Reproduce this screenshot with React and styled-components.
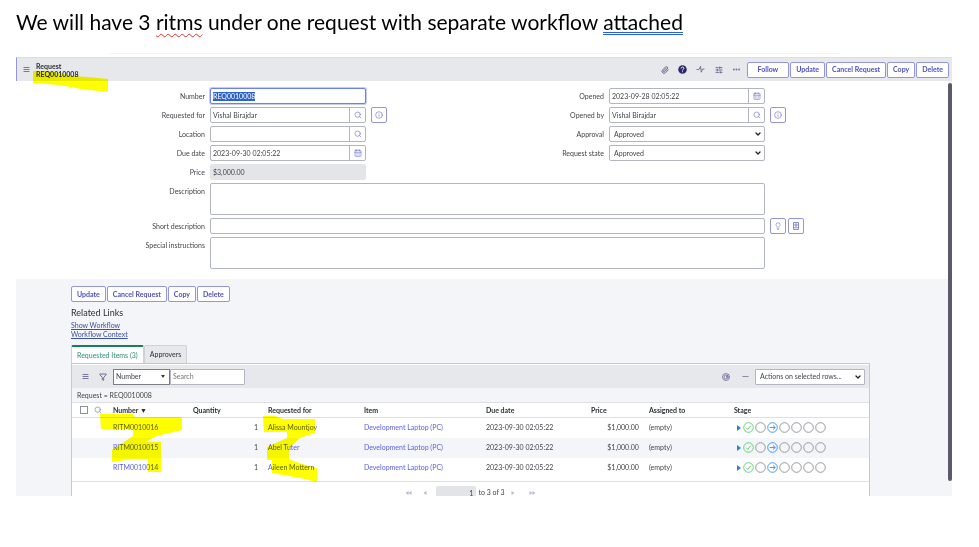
import React, { useEffect, useRef } from "react";
import styled, { createGlobalStyle } from "styled-components";
import {
  Paperclip,
  Search,
  Info,
  CalendarDays,
  SlidersHorizontal,
  Ellipsis,
  Lightbulb,
  Minus,
  Funnel,
  ChevronDown,
} from "lucide-react";

const c = {
  text: "#42454a",
  strong: "#2c2f35",
  purple: "#4f4fc4",
  purpleLine: "#9496dc",
  link: "#5a5fe6",
  line: "#b3b5c2",
  rule: "#dddfe4",
  bar: "#e7e8ec",
  wash: "#f4f5f8",
};

const GlobalStyle = createGlobalStyle`
  *, *::before, *::after { box-sizing: border-box; }
  body { margin: 0; background: #fff; overflow: hidden; }
  button, input, select, textarea { font: inherit; color: inherit; margin: 0; }
  ::selection { background: #2b62cc; color: #fff; }
`;

const Page = styled.main`
  font-family: Lato, "Liberation Sans", sans-serif;
  font-size: 7px;
  line-height: 9px;
  color: ${c.text};
  padding: 0 27px 0 16px;
`;

const Heading = styled.h1`
  margin: 0;
  padding-top: 9px;
  height: 53px;
  font-size: 21px;
  line-height: 26px;
  font-weight: 400;
  color: #000;
  white-space: nowrap;
`;

const Misspelt = styled.span`
  text-decoration: underline wavy #e03030 1px;
  text-underline-offset: 3px;
  text-decoration-skip-ink: none;
`;

const Grammar = styled.span`
  display: inline-block;
  line-height: 20px;
  border-bottom: 3px double #2a5fe0;
`;

const Hairline = styled.div`
  height: 4px;
  margin: 0 112px 0 94px;
  border-top: 1px solid #f3f3f3;
`;

const Window = styled.section`
  display: flex;
  flex-direction: column;
  overflow: hidden;
`;

const TopBar = styled.header`
  position: relative;
  display: flex;
  align-items: center;
  height: 24px;
  padding: 0 3px 0 4px;
  background: ${c.bar};
  border-top: 1px solid #dcdee2;
  border-left: 1px solid ${c.purpleLine};
`;

const RecordTitle = styled.h2`
  margin: 0 auto 0 5px;
  font-size: 7px;
  line-height: 8px;
  font-weight: 700;
  color: ${c.strong};
`;

const TopTools = styled.div`
  display: flex;
  align-items: center;
  gap: 8px;
  margin-right: 5px;
`;

const Tool = styled.button`
  display: grid;
  place-items: center;
  width: ${(p) => (p.$wide ? 12 : 10)}px;
  height: 12px;
  padding: 0;
  border: 0;
  background: none;
  color: ${(p) => (p.$dark ? "#2b2867" : "#6c6a94")};
`;

const ButtonRow = styled.div`
  display: flex;
  gap: 1px;
`;

const ActionButton = styled.button`
  height: 16px;
  padding: 0 ${(p) => (p.$roomy ? 10 : 5)}px;
  border: 1px solid ${c.purpleLine};
  border-radius: 2px;
  background: #fff;
  color: ${c.purple};
  font-weight: 700;
  white-space: nowrap;
`;

const Scroller = styled.div`
  display: flex;
  background: ${c.wash};
`;

const Content = styled.div`
  flex: 1;
  min-width: 0;
`;

const Track = styled.div`
  width: 4px;
  padding: 2px 0 15px;
  display: flex;
`;

const Thumb = styled.div`
  flex: 1;
  border-radius: 2px;
  background: #5d586b;
`;

const Form = styled.form`
  display: flex;
  flex-direction: column;
  gap: 3px;
  padding: 7px 0 10px;
  background: #fff;
`;

const Columns = styled.div`
  display: flex;
`;

const Column = styled.div`
  flex: 1 1 ${(p) => p.$basis}px;
  display: flex;
  flex-direction: column;
  gap: 3px;
`;

const Row = styled.div`
  display: grid;
  grid-template-columns: 189px minmax(0, 1fr) ${(p) => p.$aside}px;
  column-gap: 5px;
`;

const Label = styled.label`
  padding-top: 4px;
  text-align: right;
`;

const Aside = styled.div`
  display: flex;
  gap: 2px;
`;

const Control = styled.div`
  position: relative;
  display: flex;
  height: 16px;
  border: 1px solid ${(p) => (p.$active ? "#6f7ff0" : c.line)};
  border-radius: 2px;
  background: ${(p) => (p.$readonly ? "#e4e5e9" : "#fff")};
  border-color: ${(p) => (p.$readonly ? "#e4e5e9" : null)};
  box-shadow: ${(p) => (p.$active ? "0 0 0 1px #c5cbfa" : "none")};
`;

const TextInput = styled.input`
  flex: 1;
  min-width: 0;
  width: 100%;
  padding: 0 2px;
  border: 0;
  outline: 0;
  background: transparent;
`;

const TextArea = styled.textarea`
  display: block;
  width: 100%;
  height: 32px;
  padding: 2px;
  border: 1px solid ${c.line};
  border-radius: 2px;
  outline: 0;
  resize: none;
  background: #fff;
`;

const AddOn = styled.button`
  display: grid;
  place-items: center;
  width: 16px;
  padding: 0;
  border: 0;
  border-left: 1px solid ${c.line};
  background: none;
  color: #7577d4;
`;

const IconButton = styled.button`
  display: grid;
  place-items: center;
  width: 16px;
  height: 16px;
  padding: 0;
  border: 1px solid ${c.purpleLine};
  border-radius: 2px;
  background: #fff;
  color: #7577d4;
`;

const Select = styled.select`
  flex: 1;
  min-width: 0;
  padding: 0 ${(p) => (p.$tight ? 2 : 4)}px;
  border: 0;
  outline: 0;
  appearance: none;
  background: transparent;
`;

const Arrow = styled.span`
  position: absolute;
  right: 2px;
  top: 3px;
  display: grid;
  place-items: center;
  width: 8px;
  height: 8px;
  color: #22242a;
  pointer-events: none;
`;

const Related = styled.div`
  padding: 7px 78px 0 55px;
`;

const SectionTitle = styled.h3`
  margin: 5px 0 2px;
  font-size: 9px;
  line-height: 12px;
  font-weight: 400;
  color: ${c.strong};
`;

const LinkList = styled.ul`
  margin: 0;
  padding: 0;
  list-style: none;
`;

const RelatedLink = styled.a`
  display: block;
  width: fit-content;
  color: #3b4fa5;
  text-decoration: underline;
`;

const Tabs = styled.div`
  display: flex;
  margin-top: 6px;
  height: 18px;
`;

const Tab = styled.button`
  padding: 0 5px;
  border: 1px solid #cfd1d6;
  border-top: ${(p) => (p.$on ? "2px solid #14805e" : "1px solid #cfd1d6")};
  border-bottom: 0;
  border-radius: 2px 2px 0 0;
  background: ${(p) => (p.$on ? "#fff" : c.bar)};
  color: ${(p) => (p.$on ? "#2f8f72" : c.strong)};
  white-space: nowrap;
`;

const Panel = styled.div`
  position: relative;
  height: 133px;
  overflow: hidden;
  border: 1px solid #c6c8ce;
  border-bottom: 0;
  background: #fff;
`;

const ListBar = styled.div`
  display: flex;
  align-items: center;
  height: 23px;
  margin-top: 1px;
  padding: 0 4px 0 8px;
  background: ${c.bar};
`;

const ListTools = styled.div`
  display: flex;
  gap: 8px;
  margin-right: 5px;
`;

const SearchGroup = styled.div`
  display: flex;
  margin-right: auto;
`;

const Sized = styled(Control)`
  width: ${(p) => p.$width}px;
  border-color: ${(p) => (p.$ink ? "#7b7e86" : c.line)};
  border-radius: ${(p) => (p.$ink ? 0 : 1)}px;
`;

const Crumb = styled.div`
  height: 14px;
  padding: 3px 5px;
  background: ${c.wash};
`;

const Table = styled.table`
  width: 100%;
  table-layout: fixed;
  border-collapse: collapse;
`;

const Th = styled.th`
  height: 15px;
  padding: 0 5px;
  border-top: 1px solid ${c.rule};
  border-bottom: 1px solid ${c.rule};
  text-align: left;
  font-weight: 700;
  color: ${c.strong};
  white-space: nowrap;
`;

const Tr = styled.tr`
  background: ${(p) => (p.$alt ? c.wash : "#fff")};
`;

const Td = styled.td`
  height: 20px;
  padding: 0 5px;
  text-align: ${(p) => (p.$num ? "right" : "left")};
  white-space: nowrap;
`;

const ItemLink = styled.a`
  color: ${c.link};
  text-decoration: none;
`;

const HeadTools = styled.div`
  display: flex;
  align-items: center;
  gap: 6px;
  padding-left: 3px;
`;

const Check = styled.input`
  appearance: none;
  width: 8px;
  height: 8px;
  margin: 0;
  border: 1px solid #8d90a0;
  background: #fff;
`;

const Stages = styled.div`
  display: flex;
  align-items: center;
  gap: 1px;
  padding-left: 3px;
`;

const Pager = styled.div`
  display: flex;
  justify-content: center;
  align-items: center;
  gap: 2px;
  margin-top: 3px;
  padding-top: 4px;
  border-top: 1px solid ${c.rule};
`;

const PagerButton = styled.button`
  display: grid;
  place-items: center;
  width: 16px;
  height: 14px;
  padding: 0;
  border: 0;
  background: none;
`;

const PageInput = styled.input`
  width: 40px;
  height: 14px;
  padding: 0 3px;
  border: 0;
  border-radius: 2px;
  background: #e2e4e8;
  text-align: right;
`;

const TopMarker = styled.svg`
  position: absolute;
  left: 16px;
  top: 12px;
  mix-blend-mode: multiply;
  pointer-events: none;
`;

const ListMarker = styled.svg`
  position: absolute;
  left: 28px;
  top: 50px;
  mix-blend-mode: multiply;
  pointer-events: none;
`;

const Chevron = () => (
  <Arrow>
    <ChevronDown size={8} strokeWidth={4} />
  </Arrow>
);

const BarsIcon = () => (
  <svg width="7" height="7" viewBox="0 0 7 7" fill="none" stroke="currentColor">
    <path d="M0.500 1.500h6M0.500 3.500h6M0.500 5.500h6" strokeWidth="0.900" />
  </svg>
);

const PulseIcon = () => (
  <svg width="9" height="9" viewBox="0 0 18 18" fill="none" stroke="currentColor" strokeWidth="1.800">
    <path d="M1 9h5l3-6.500 1.500 12L13 8h4" strokeLinejoin="round" />
  </svg>
);

const HelpIcon = () => (
  <svg width="9" height="9" viewBox="0 0 18 18">
    <circle cx="9" cy="9" r="8.500" fill="currentColor" />
    <path d="M6.200 7c0-4 5.800-3.600 5.600-.4C11.700 8.500 9 8.500 9 11" fill="none" stroke="#fff" strokeWidth="1.900" />
    <circle cx="9" cy="13.500" r="1.200" fill="#fff" />
  </svg>
);

const BookIcon = () => (
  <svg width="8" height="8" viewBox="0 0 16 16" fill="none" stroke="currentColor" strokeWidth="1.700">
    <path d="M3 1h10v14H3zM3 11.500h10M6 4h4v4H6z" />
  </svg>
);

const TargetIcon = () => (
  <svg width="8" height="8" viewBox="0 0 16 16" fill="none" stroke="currentColor" strokeWidth="1.600">
    <circle cx="8" cy="8" r="7" />
    <circle cx="8" cy="8" r="4" />
    <path d="M8 8l5-5M8 8h6" />
  </svg>
);

const ringColor = { done: "#5fce74", active: "#3c92ee", open: "#8e9097" };
const ringMark = { done: "M7 12.500l3.500 3.500L17 8", active: "M6 12h12M13 7.500l5 4.500-5 4.500", open: "" };

const Ring = ({ state }) => (
  <svg width="11" height="11" viewBox="0 0 24 24" fill="none" stroke={ringColor[state]} strokeWidth="2">
    <circle cx="12" cy="12" r="10.500" />
    {ringMark[state] && <path d={ringMark[state]} />}
  </svg>
);

const PagerIcon = ({ back, twice }) => (
  <svg width="7" height="6" viewBox="0 0 14 12" fill="#bab9d0">
    {back ? <path d="M7 2v8L1 6z" /> : <path d="M1 2v8l6-4z" />}
    {twice && (back ? <path d="M13 2v8L7 6z" /> : <path d="M7 2v8l6-4z" />)}
  </svg>
);

const Field = ({ id, label, value = "", addOn, aside, area, options, readOnly, active, info, inputRef, extra }) => (
  <Row $aside={aside}>
    <Label htmlFor={id}>{label}</Label>
    {area ? (
      <TextArea id={id} />
    ) : (
      <Control $active={active} $readonly={readOnly}>
        {options ? (
          <>
            <Select id={id} defaultValue={value}>
              <option>{value}</option>
            </Select>
            <Chevron />
          </>
        ) : (
          <TextInput id={id} defaultValue={value} readOnly={readOnly} ref={inputRef} />
        )}
        {addOn === "search" && (
          <AddOn type="button" aria-label={`Look up ${label}`}>
            <Search size={8} />
          </AddOn>
        )}
        {addOn === "date" && (
          <AddOn type="button" aria-label={`Pick ${label}`}>
            <CalendarDays size={8} />
          </AddOn>
        )}
      </Control>
    )}
    <Aside>
      {info && (
        <IconButton type="button" aria-label={`About ${label}`}>
          <Info size={8} />
        </IconButton>
      )}
      {extra}
    </Aside>
  </Row>
);

const actions = ["Update", "Cancel Request", "Copy", "Delete"];
const columns = [
  ["", 36],
  ["Number", 80],
  ["Quantity", 75],
  ["Requested for", 96],
  ["Item", 122],
  ["Due date", 105],
  ["Price", 58],
  ["Assigned to", 85],
  ["Stage", 140],
];
const items = [
  ["RITM0010016", "Alissa Mountjoy"],
  ["RITM0010015", "Abel Tuter"],
  ["RITM0010014", "Aileen Mottern"],
];
const stages = ["done", "open", "active", "open", "open", "open", "open"];

export default function App() {
  const numberRef = useRef(null);
  useEffect(() => {
    numberRef.current.focus();
    numberRef.current.select();
  }, []);

  return (
    <Page>
      <GlobalStyle />
      <Heading>
        We will have 3 <Misspelt>ritms</Misspelt> under one request with separate workflow <Grammar>attached</Grammar>
      </Heading>
      <Hairline />
      <Window>
        <TopBar>
          <Tool aria-label="Menu"><BarsIcon /></Tool>
          <RecordTitle>
            Request
            <br />
            REQ0010008
          </RecordTitle>
          <TopTools>
            <Tool aria-label="Attachments"><Paperclip size={8} strokeWidth={3} /></Tool>
            <Tool aria-label="Help" $dark><HelpIcon /></Tool>
            <Tool aria-label="Activity"><PulseIcon /></Tool>
            <Tool aria-label="Settings"><SlidersHorizontal size={8} strokeWidth={3} /></Tool>
            <Tool aria-label="More"><Ellipsis size={9} strokeWidth={3} /></Tool>
          </TopTools>
          <ButtonRow>
            <ActionButton $roomy>Follow</ActionButton>
            {actions.map((a) => (
              <ActionButton key={a}>{a}</ActionButton>
            ))}
          </ButtonRow>
          <TopMarker width="76" height="24" viewBox="0 0 76 24">
            <path d="M0 1h15l25 5 14 1 21 2v13l-27-3-22-4-26-2z" fill="#ffff00" />
          </TopMarker>
        </TopBar>
        <Scroller>
          <Content>
            <Form>
              <Columns>
                <Column $basis={399}>
                  <Field id="number" label="Number" value="REQ0010008" aside={44} active inputRef={numberRef} />
                  <Field id="for" label="Requested for" value="Vishal Birajdar" aside={44} addOn="search" info />
                  <Field id="location" label="Location" aside={44} addOn="search" />
                  <Field id="due" label="Due date" value="2023-09-30 02:05:22" aside={44} addOn="date" />
                  <Field id="price" label="Price" value="$3,000.00" aside={44} readOnly />
                </Column>
                <Column $basis={533}>
                  <Field id="opened" label="Opened" value="2023-09-28 02:05:22" aside={178} addOn="date" />
                  <Field id="by" label="Opened by" value="Vishal Birajdar" aside={178} addOn="search" info />
                  <Field id="approval" label="Approval" value="Approved" aside={178} options />
                  <Field id="state" label="Request state" value="Approved" aside={178} options />
                </Column>
              </Columns>
              <Field id="desc" label="Description" aside={178} area />
              <Field
                id="short"
                label="Short description"
                aside={178}
                extra={
                  <>
                    <IconButton type="button" aria-label="Suggestions"><Lightbulb size={8} /></IconButton>
                    <IconButton type="button" aria-label="Knowledge"><BookIcon /></IconButton>
                  </>
                }
              />
              <Field id="special" label="Special instructions" aside={178} area />
            </Form>
            <Related>
              <ButtonRow>
                {actions.map((a) => (
                  <ActionButton key={a}>{a}</ActionButton>
                ))}
              </ButtonRow>
              <SectionTitle>Related Links</SectionTitle>
              <LinkList>
                <li><RelatedLink href="#workflow">Show Workflow</RelatedLink></li>
                <li><RelatedLink href="#context">Workflow Context</RelatedLink></li>
              </LinkList>
              <Tabs role="tablist">
                <Tab role="tab" aria-selected="true" $on>Requested Items (3)</Tab>
                <Tab role="tab" aria-selected="false">Approvers</Tab>
              </Tabs>
              <Panel>
                <ListBar>
                  <ListTools>
                    <Tool aria-label="List menu"><BarsIcon /></Tool>
                    <Tool aria-label="Filter"><Funnel size={8} strokeWidth={3} /></Tool>
                  </ListTools>
                  <SearchGroup>
                    <Sized $width={57} $ink>
                      <Select $tight aria-label="Search field" defaultValue="Number">
                        <option>Number</option>
                      </Select>
                      <Arrow>
                        <svg width="4" height="3" viewBox="0 0 4 3"><path d="M0 0h4L2 3z" fill="#3a3c42" /></svg>
                      </Arrow>
                    </Sized>
                    <Sized $width={75}>
                      <TextInput aria-label="Search" placeholder="Search" />
                    </Sized>
                  </SearchGroup>
                  <ListTools>
                    <Tool $wide aria-label="Activity stream"><TargetIcon /></Tool>
                    <Tool aria-label="Collapse"><Minus size={9} /></Tool>
                  </ListTools>
                  <Sized $width={110}>
                    <Select aria-label="Actions" defaultValue="Actions on selected rows...">
                      <option>Actions on selected rows...</option>
                    </Select>
                    <Chevron />
                  </Sized>
                </ListBar>
                <Crumb>Request = REQ0010008</Crumb>
                <Table>
                  <colgroup>
                    {columns.map(([name, w]) => (
                      <col key={name} width={`${(w / 797) * 100}%`} />
                    ))}
                  </colgroup>
                  <thead>
                    <tr>
                      {columns.map(([name]) => (
                        <Th key={name}>
                          {name ? (
                            name === "Number" ? "Number  ▼" : name
                          ) : (
                            <HeadTools>
                              <Check type="checkbox" aria-label="Select all" />
                              <Search size={8} color="#7577d4" />
                            </HeadTools>
                          )}
                        </Th>
                      ))}
                    </tr>
                  </thead>
                  <tbody>
                    {items.map(([number, person], i) => (
                      <Tr key={number} $alt={i === 1}>
                        <Td />
                        <Td><ItemLink href="#item">{number}</ItemLink></Td>
                        <Td $num>1</Td>
                        <Td><ItemLink href="#person">{person}</ItemLink></Td>
                        <Td><ItemLink href="#laptop">Development Laptop (PC)</ItemLink></Td>
                        <Td>2023-09-30 02:05:22</Td>
                        <Td $num>$1,000.00</Td>
                        <Td>(empty)</Td>
                        <Td>
                          <Stages>
                            <svg width="5" height="6" viewBox="0 0 5 6"><path d="M0 0v6l4-3z" fill="#2f7fe0" /></svg>
                            {stages.map((s, n) => (
                              <Ring key={n} state={s} />
                            ))}
                          </Stages>
                        </Td>
                      </Tr>
                    ))}
                  </tbody>
                </Table>
                <Pager>
                  <PagerButton aria-label="First"><PagerIcon back twice /></PagerButton>
                  <PagerButton aria-label="Previous"><PagerIcon back /></PagerButton>
                  <PageInput aria-label="Page row" defaultValue="1" />
                  <span>to 3 of 3</span>
                  <PagerButton aria-label="Next"><PagerIcon /></PagerButton>
                  <PagerButton aria-label="Last"><PagerIcon twice /></PagerButton>
                </Pager>
                <ListMarker width="220" height="70" viewBox="0 0 220 70" fill="#ffff00">
                  <path d="M0 0h33l2 3h45q2 0 2 2v11l-25 6-12 6h16v30H48V45H33l-21 3V36l21-14v-7H1z" />
                  <path d="M163 2h12l8 3h32v14l-15 5-11 10v11l13 5 15 4v14l-17-4-28-5V46h10-15V33l20-9v-6h-23z" />
                </ListMarker>
              </Panel>
            </Related>
          </Content>
          <Track>
            <Thumb />
          </Track>
        </Scroller>
      </Window>
    </Page>
  );
}
